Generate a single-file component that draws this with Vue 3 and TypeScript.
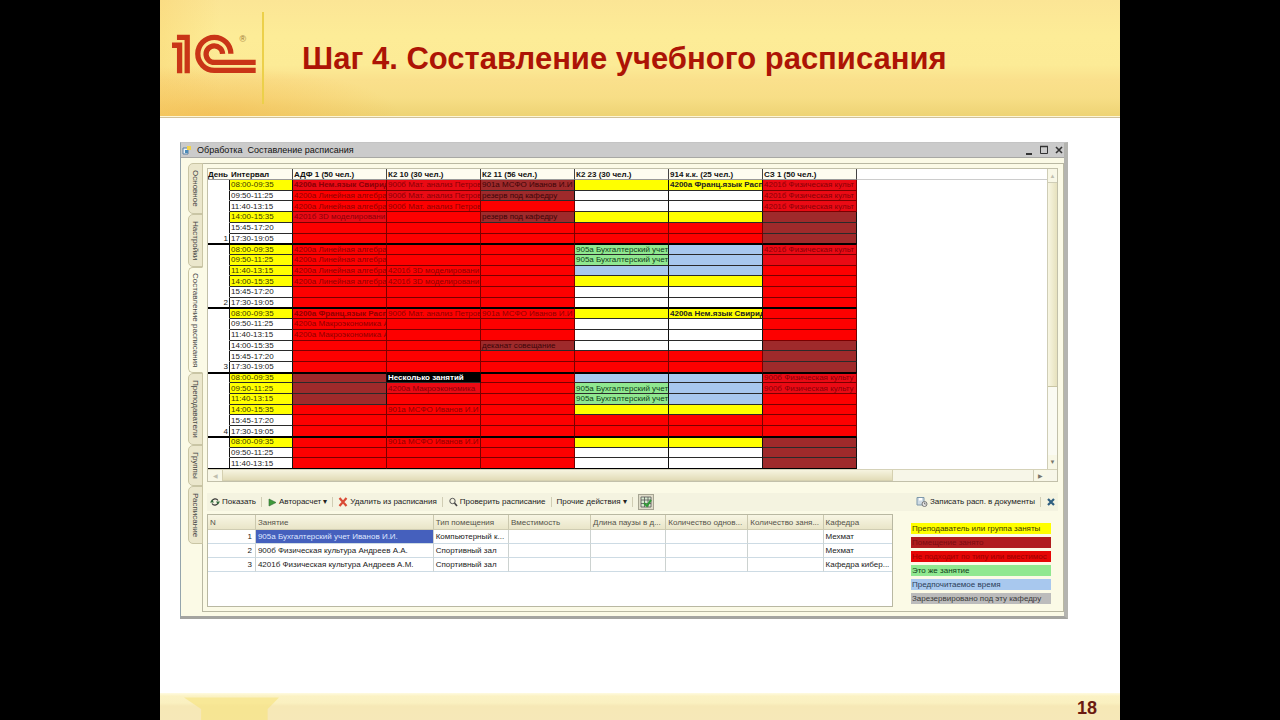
<script setup lang="ts">
import { ref } from 'vue'

interface Cell { kind: string; text: string; bold: boolean }
interface Slot { time: string; busy: boolean; cells: Cell[] }
interface Day { label: string; slots: Slot[] }

const rooms: string[] = ['АДФ 1 (50 чел.)', 'К2 10 (30 чел.)', 'К2 11 (56 чел.)', 'К2 23 (30 чел.)', '914 к.к. (25 чел.)', 'СЗ 1 (50 чел.)']
const times: string[] = ['08:00-09:35', '09:50-11:25', '11:40-13:15', '14:00-15:35', '15:45-17:20', '17:30-19:05']

const kinds: Record<string, string> = {
  r: 'unfit', c: 'clash', b: 'taken', w: 'free', y: 'busy', u: 'preferred', g: 'same', k: 'multi',
}

const linear = '4200а Линейная алгебра'
const model = '4201б 3D моделировани'
const math = '900б Мат. анализ Петров'
const msfo = '901а МСФО Иванов И.И'
const macro = '4200а Макроэкономика'
const account = '905а Бухгалтерский учет'
const sport = '4201б Физическая культ'
const sport900 = '900б Физическая культу'

// Each row: six room codes, then texts by room index; '*' marks bold text.
type Row = [string, Record<number, string>?]
function day(label: string, busy: string, rows: Row[]): Day {
  return {
    label,
    slots: rows.map(([codes, texts], i) => ({
      time: times[i],
      busy: busy[i] === 'y',
      cells: codes.split('').map((code, c) => {
        const raw = texts?.[c] ?? ''
        return { kind: kinds[code], text: raw.replace('*', ''), bold: raw.startsWith('*') }
      }),
    })),
  }
}

const days: Day[] = [
  day('1', 'ywwyww', [
    ['ccbyyc', { 0: '*4200а Нем.язык Свирид', 1: math, 2: msfo, 4: '*4200а Франц.язык Расп', 5: sport }],
    ['rcbwwc', { 0: linear, 1: math, 2: 'резерв под кафедру', 5: sport }],
    ['rrrwwc', { 0: linear, 1: math, 5: sport }],
    ['crbyyb', { 0: model, 2: 'резерв под кафедру' }],
    ['rrrrrb'],
    ['rrrrrb'],
  ]),
  day('2', 'yyyyww', [
    ['rrrguc', { 0: linear, 3: account, 5: sport }],
    ['rrrguc', { 0: linear, 3: account }],
    ['rrruur', { 0: linear, 1: model }],
    ['rrryyr', { 0: linear, 1: model }],
    ['rrrwwr'],
    ['rrrwwr'],
  ]),
  day('3', 'ywwwww', [
    ['rrryyr', { 0: '*4200а Франц.язык Расп', 1: math, 2: msfo, 4: '*4200а Нем.язык Свирид' }],
    ['rrrwwr', { 0: macro + ' А' }],
    ['rrrwwr', { 0: macro + ' А' }],
    ['rrbwwb', { 2: 'деканат совещание' }],
    ['rrrrrb'],
    ['rrrrrb'],
  ]),
  day('4', 'yyyyww', [
    ['bkruuc', { 1: '*Несколько занятий', 5: sport900 }],
    ['bcrguc', { 1: macro, 3: account, 5: sport900 }],
    ['brrgur', { 3: account }],
    ['rrryyr', { 1: msfo }],
    ['rrrrrr'],
    ['rrrrrr'],
  ]),
  day('', 'yww', [
    ['rrryyb', { 1: msfo }],
    ['rrrwwb'],
    ['rrrwwb'],
  ]),
]

const tabs = ['Основное', 'Настройки', 'Составление расписания', 'Преподаватели', 'Группы', 'Расписание']
const activeTab = ref(2)

const lessonHeads = ['N', 'Занятие', 'Тип помещения', 'Вместимость', 'Длина паузы в д...', 'Количество однов...', 'Количество заня...', 'Кафедра']
const lessons = [
  { name: '905а Бухгалтерский учет Иванов И.И.', room: 'Компьютерный к...', dept: 'Мехмат' },
  { name: '900б Физическая культура Андреев А.А.', room: 'Спортивный зал', dept: 'Мехмат' },
  { name: '4201б Физическая культура Андреев А.М.', room: 'Спортивный зал', dept: 'Кафедра кибер...' },
]
const selected = ref(0)

const legend = [
  { kind: 'busy', text: 'Преподаватель или группа заняты' },
  { kind: 'taken', text: 'Помещение занято' },
  { kind: 'unfit', text: 'Не подходит по типу или вместимос' },
  { kind: 'same', text: 'Это же занятие' },
  { kind: 'preferred', text: 'Предпочитаемое время' },
  { kind: 'reserved', text: 'Зарезервировано под эту кафедру' },
]
</script>

<template>
  <main class="slide">
    <header class="banner">
      <svg class="logo" viewBox="30 100 264 130" role="img" aria-label="1С">
        <g fill="none" stroke="#c93517" stroke-width="16">
          <path d="M50 113H81V222" />
          <path d="M35 137H58V222" />
          <path d="M213 163A50 50 0 1 0 163 213H288" />
          <path d="M188 163A25 25 0 1 0 163 189H288" />
        </g>
        <text x="239" y="126" font-size="27" fill="#a07a3c">®</text>
      </svg>
      <h1>Шаг 4. Составление учебного расписания</h1>
    </header>

    <section class="window">
      <div class="titlebar">
        <svg class="ic" viewBox="0 0 10 10"><path d="M1 3h5v6H1z" fill="#eef4f8" stroke="#5a7fa0" /><path d="M5 1h4v4H5z" fill="#f3d34a" /><path d="M3 5h3v3H3z" fill="#4a8ab8" /></svg>
        <span class="caption">Обработка&nbsp; Составление расписания</span>
        <button aria-label="Свернуть"><svg viewBox="0 0 10 10"><path d="M2 9H8" stroke="#333" stroke-width="2" /></svg></button>
        <button aria-label="Развернуть"><svg viewBox="0 0 10 10"><path d="M1.500 1.500H8.500V8.500H1.500Z" fill="none" stroke="#333" /><path d="M1 1.500H9" stroke="#333" stroke-width="1.500" /></svg></button>
        <button aria-label="Закрыть"><svg viewBox="0 0 10 10"><path d="M2 2L8 8M8 2L2 8" stroke="#333" stroke-width="1.600" /></svg></button>
      </div>

      <div class="body">
        <nav class="tabs">
          <button v-for="(t, i) in tabs" :key="t" :class="{ active: i === activeTab }" @click="activeTab = i">{{ t }}</button>
        </nav>

        <div class="panel">
          <div class="frame">
            <div class="view">
              <table class="schedule">
                <colgroup>
                  <col class="c-day"><col class="c-time"><col v-for="r in rooms" :key="r" class="c-room"><col>
                </colgroup>
                <thead>
                  <tr><th>День</th><th>Интервал</th><th v-for="r in rooms" :key="r">{{ r }}</th><th class="rest"></th></tr>
                </thead>
                <tbody v-for="(d, di) in days" :key="di">
                  <tr v-for="(s, si) in d.slots" :key="si">
                    <td class="day">{{ si === 5 ? d.label : '' }}</td>
                    <td class="time" :class="s.busy ? 'busy' : 'free'">{{ s.time }}</td>
                    <td v-for="(c, ci) in s.cells" :key="ci" :class="[c.kind, { bold: c.bold }]">{{ c.text }}</td>
                    <td class="rest"></td>
                  </tr>
                </tbody>
              </table>
            </div>
            <div class="vbar">
              <button aria-label="Вверх">▲</button><span class="thumb"></span><button class="dark" aria-label="Вниз">▼</button>
            </div>
            <div class="hbar">
              <button aria-label="Влево">◀</button><span class="thumb"></span><button class="dark" aria-label="Вправо">▶</button>
            </div>
          </div>

          <div class="toolbar">
            <button><svg class="ic" viewBox="0 0 10 10"><path d="M2 4A3.400 3.400 0 0 1 8 3.500M8 6A3.400 3.400 0 0 1 2 6.500" fill="none" stroke="#333" stroke-width="1.200" /><path d="M0 5.500L2 2.500L4 5.500ZM6 4.500L8 7.500L10 4.500Z" fill="#2f6a3a" /></svg>Показать</button>
            <i></i>
            <button><svg class="ic" viewBox="0 0 10 10"><path d="M2 2L9 5.500L2 9Z" fill="#3f9a3a" stroke="#2f6a35" stroke-width=".6" /></svg>Авторасчет<b>▾</b></button>
            <i></i>
            <button><svg class="ic" viewBox="0 0 10 10"><path d="M1.500 1L8.500 9M8.500 1L1.500 9" stroke="#d94a35" stroke-width="2.200" /></svg>Удалить из расписания</button>
            <i></i>
            <button><svg class="ic" viewBox="0 0 10 10"><circle cx="4.500" cy="4" r="2.700" fill="none" stroke="#555" /><path d="M6.500 6L9 9" stroke="#444" stroke-width="1.600" /></svg>Проверить расписание</button>
            <i></i>
            <button>Прочие действия<b>▾</b></button>
            <i></i>
            <button class="pressed" aria-label="Таблица"><svg viewBox="0 0 12 12"><path d="M1 1H11V11H1ZM1 4H11M1 7.500H11M4.500 1V11M8 1V11" fill="#d8ead0" stroke="#555" stroke-width=".8" /><path d="M4 7L7 10L11 4" fill="none" stroke="#2f9a35" stroke-width="2" /></svg></button>
            <span class="gap"></span>
            <button><svg class="ic disk" viewBox="0 0 12 10"><path d="M1 0.500H8V8H1Z" fill="#cfdbe4" stroke="#7e98ab" /><path d="M3 1H6V3.500H3Z" fill="#fff" /><circle cx="8.500" cy="7" r="2.500" fill="#e8e8e8" stroke="#777" /><path d="M8.500 5.500V7H9.800" stroke="#555" fill="none" stroke-width=".7" /></svg>Записать расп. в документы</button>
            <i></i>
            <button aria-label="Закрыть"><svg class="ic" viewBox="0 0 10 10"><path d="M2 2L8 8M8 2L2 8" stroke="#2f5f80" stroke-width="2.200" /></svg></button>
          </div>

          <div class="bottom">
            <div class="list">
              <table class="lessons">
                <colgroup><col class="l-n"><col class="l-name"><col class="l-room"><col class="l-cap"><col class="l-pause"><col class="l-qty"><col class="l-cnt"><col class="l-dept"></colgroup>
                <thead><tr><th v-for="h in lessonHeads" :key="h">{{ h }}</th></tr></thead>
                <tbody>
                  <tr v-for="(l, i) in lessons" :key="i" @click="selected = i">
                    <td class="num">{{ i + 1 }}</td>
                    <td :class="{ sel: i === selected }">{{ l.name }}</td>
                    <td>{{ l.room }}</td><td></td><td></td><td></td><td></td>
                    <td>{{ l.dept }}</td>
                  </tr>
                </tbody>
              </table>
            </div>
            <ul class="legend">
              <li v-for="l in legend" :key="l.kind" :class="l.kind">{{ l.text }}</li>
            </ul>
          </div>
        </div>
      </div>
    </section>

    <footer class="foot">
      <svg class="cup" viewBox="0 0 100 26" aria-hidden="true"><path d="M0 2H100L88 14V26H18V14Z" fill="#f6e27c" opacity=".6" /></svg>
      <span>18</span>
    </footer>
  </main>
</template>

<style>
body { margin: 0; background: #000; }
</style>

<style scoped>
* { box-sizing: border-box; }
.slide {
  width: 75%;
  min-height: 100vh;
  margin: 0 auto;
  display: flex;
  flex-direction: column;
  background: #fff;
  font-family: "Liberation Sans", Arial, sans-serif;
  font-size: 8px;
  color: #222;
}
button { font: inherit; color: inherit; margin: 0; padding: 0; border: 0; background: none; white-space: nowrap; }
h1 { margin: 0; }

.banner {
  height: 118px;
  display: flex;
  align-items: flex-start;
  padding: 12px 12px 0 10px;
  border-bottom: 1px solid #cfc09a;
  box-shadow: inset 0 -1px #fdf6d8;
  background:
    radial-gradient(ellipse 190px 50px at 50px 116px, #f6b84a99, transparent),
    linear-gradient(90deg, #f8cf6a66, transparent 60px),
    linear-gradient(#fbe595 0, #fdec97 36px, #fceb96 65px, #fae08c 80px, #f7de86 98px, #eed374 116px);
}
.logo { width: 88px; height: 43px; margin-top: 21px; flex: none; }
.banner h1 {
  margin-left: 4px;
  padding: 29px 0 34px 38px;
  border-left: 2px solid #ecd04a;
  color: #ad1405;
  font-size: 31px;
  line-height: 36px;
  white-space: nowrap;
  height: 92px;
}

.window {
  margin: 24px 52px 16px 20px;
  border: 1px solid #b4b4b0;
  border-width: 1px 4px 3px 1px;
  border-color: #c4c4c4 #b4b4b0 #a4a4a0 #94a4ac;
  background: #fbfae6;
}
.titlebar { height: 15px; display: flex; align-items: center; gap: 5px; padding: 0 0 0 1px; background: #cbcbcb; border-bottom: 1px solid #a8a8a4; }
.titlebar .caption { flex: 1; font-size: 9px; line-height: 14px; color: #111; }
.titlebar button { width: 10px; height: 10px; }
.titlebar button svg { display: block; width: 10px; height: 10px; }
.ic { width: 10px; height: 10px; flex: none; }

.body { display: flex; padding: 5px 0 4px 7px; }
.tabs { width: 15px; flex: none; display: flex; flex-direction: column; margin-right: -1px; z-index: 1; }
.tabs button {
  writing-mode: vertical-rl;
  width: 15px;
  padding: 6px 0;
  line-height: 13px;
  text-align: left;
  border: 1px solid #c9c5a4;
  border-radius: 5px 0 0 5px;
  background: #ebe7cc;
  color: #444;
}
.tabs button.active { padding: 5px 0; background: #fbfae6; border-right-color: #fbfae6; }

.panel { flex: 1; min-width: 0; border: 1px solid #b9b8a2; padding: 4px 5px 4px 4px; }
.frame { display: grid; grid-template-columns: minmax(0, 1fr) 10px; grid-template-rows: auto 12px; border: 1px solid #c2c0aa; background: #fff; }
.view { height: 300px; overflow: hidden; }

.schedule { width: 100%; height: 300px; table-layout: fixed; border-collapse: separate; border-spacing: 0; line-height: 9px; }
.c-day { width: 22px; }
.c-time { width: 63px; }
.c-room { width: 94px; }
.schedule th, .schedule td { padding: 0 0 0 1px; overflow: hidden; white-space: nowrap; text-align: left; vertical-align: middle; }
.schedule th { background: #fdfcf0; border-right: 1px solid #444; border-bottom: 1px solid #999; font-size: 8px; height: 11px; color: #111; }
.schedule th:first-child { padding: 0; border-right: 0; }
.schedule td { border-right: 1px solid #111; border-bottom: 1px solid #2a2a2a; height: 10px; }
.schedule td.day { text-align: right; border-bottom-color: transparent; padding-right: 1px; }
.schedule td.unfit, .schedule td.clash { border-bottom-color: #7a0000; border-right-color: #7a0000; }
.schedule tbody tr:last-child td { border-bottom-color: #000; }
.schedule tbody + tbody tr:first-child td { border-top: 1px solid #000; line-height: 8px; }
.schedule .rest, .schedule tbody tr .rest.rest { background: #fff; border-right: 0; border-top: 0; border-bottom-color: transparent; }
.schedule th.rest.rest { border-bottom-color: #ccc; }
.bold { font-weight: bold; }

.free { background: #fff; }
.busy { background: #ff0; color: #3c3a00; }
.unfit { background: #fd0000; color: #900000; }
.clash { background: #ea0a14; color: #8a0006; }
.taken { background: #9f2a2b; color: #3d0508; }
.preferred { background: #a8c8ee; color: #2b3d58; }
.same { background: #90e890; color: #10401a; }
.multi { background: #000; color: #fff; }
.reserved { background: #bcbcbc; color: #3a3a3a; }
.schedule td.busy.bold { color: #222; }

.vbar { display: flex; flex-direction: column; align-items: stretch; background: #fafaf2; border-left: 1px solid #cfcdb6; }
.hbar { grid-column: 1 / -1; display: flex; background: #f7f6e8; border-top: 1px solid #d5d2b8; padding-right: 10px; }
.vbar button, .hbar button { font-size: 6px; line-height: 10px; color: #c0beae; background: #f8f7e6; flex: none; }
.vbar button { height: 14px; border-bottom: 1px solid #cfcdb6; }
.hbar button { width: 14px; }
.vbar button.dark, .hbar button.dark { color: #77756a; }
.vbar button.dark { margin-top: auto; border: 0; }
.hbar button.dark { margin-left: auto; border-left: 1px solid #cfcdb6; }
.vbar .thumb { flex: 0 0 68%; background: linear-gradient(90deg, #f8f6e2, #e6e1bd); border-bottom: 1px solid #c9c5a4; }
.hbar .thumb { flex: 0 0 80%; background: linear-gradient(#f6f4e0, #e2dcb8); border: 1px solid #d5d0b0; border-top: 0; }

.toolbar { display: flex; align-items: center; gap: 3px; height: 18px; margin-top: 11px; padding: 0 2px 0 3px; background: #f4f3e0; }
.toolbar button { display: flex; align-items: center; gap: 2px; line-height: 12px; }
.toolbar button b { font-size: 8px; font-weight: normal; }
.toolbar i { width: 1px; height: 10px; background: #d0cdb4; margin: 0 2px; }
.toolbar .gap { flex: 1; }
.toolbar .disk { width: 12px; }
.toolbar .pressed { width: 16px; height: 16px; justify-content: center; border: 1px solid #a6a492; background: #dedbc8; }
.toolbar .pressed svg { width: 12px; height: 12px; flex: none; }

.bottom { display: flex; align-items: flex-start; margin-top: 3px; }
.list { flex: 1; min-width: 0; height: 93px; border: 1px solid #b9b8a2; background: #fff; }
.lessons { width: 100%; table-layout: fixed; border-collapse: separate; border-spacing: 0; }
.lessons th, .lessons td { padding: 0 0 0 2px; overflow: hidden; white-space: nowrap; text-align: left; font-weight: normal; border-right: 1px solid #ccd2d0; }
.lessons th { height: 15px; color: #55534a; background: linear-gradient(#f8f6e4, #e9e5c8); border-right-color: #cbc8ae; border-bottom: 1px solid #cfccb2; }
.lessons td { height: 14px; line-height: 12px; border-bottom: 1px solid #cddbe4; }
.lessons tr > :last-child { border-right: 0; }
.lessons .num { text-align: right; padding-right: 3px; }
.lessons .sel { background: #4560bd; color: #dfe6ff; }
.l-n { width: 7%; } .l-name { width: 26%; } .l-room { width: 11%; } .l-cap { width: 12%; }
.l-pause { width: 11%; } .l-qty { width: 12%; } .l-cnt { width: 11%; } .l-dept { width: 10%; }

.legend { list-style: none; flex: 0 0 140px; margin: 9px 7px 0 18px; padding: 0; display: grid; gap: 3px; }
.legend li { height: 11px; line-height: 11px; padding-left: 1px; white-space: nowrap; }
.legend .taken { background: #b01c1e; color: #7c0c10; }
.legend .unfit { background: #e60606; color: #9c0000; }

.foot {
  height: 27px;
  margin-top: auto;
  display: flex;
  align-items: center;
  justify-content: space-between;
  padding: 3px 23px 0 24px;
  background: linear-gradient(#fffbe0 0, #fbf2c4 3px, #faf0c0 10px, #f6e8b6 13px, #f6e8b8 100%);
  color: #6b1a10;
  font-size: 18px;
  font-weight: bold;
}
.cup { width: 95px; height: 26px; }
</style>
